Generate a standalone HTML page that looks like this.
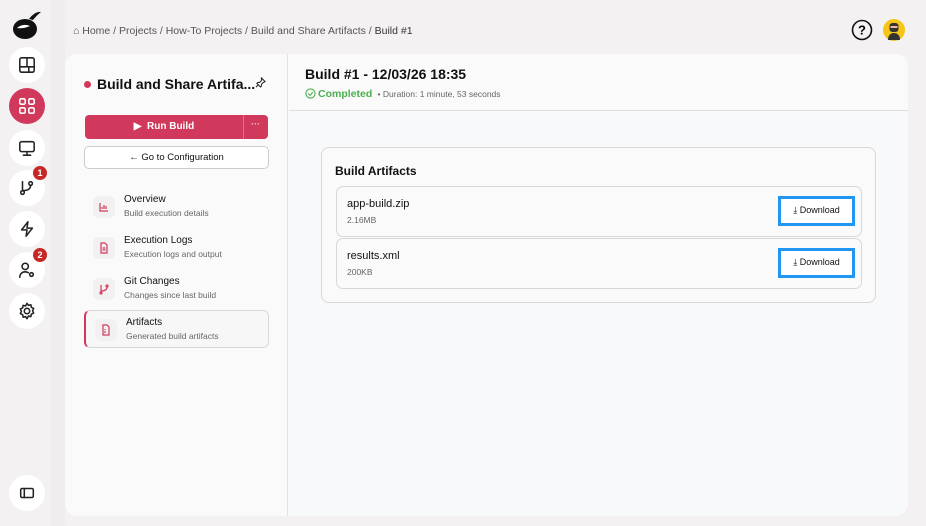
<!DOCTYPE html>
<html><head><style>
*{box-sizing:border-box;margin:0;padding:0}
body{width:926px;height:526px;overflow:hidden;background:#f3f1f2;font-family:"Liberation Sans",sans-serif;color:#111;position:relative}
.rail{position:absolute;left:0;top:0;width:52px;height:526px;background:#f3f1f2}
.strip{position:absolute;left:51px;top:0;width:14px;height:526px;background:#efedee}
.ic{position:absolute;left:9px;width:36px;height:36px;border-radius:50%;background:#fff;display:flex;align-items:center;justify-content:center}
.ic svg{width:18px;height:18px;fill:none;stroke:#222;stroke-width:1.7;stroke-linecap:round;stroke-linejoin:round}
.badge{position:absolute;right:-2px;top:-4px;width:14px;height:14px;border-radius:50%;background:#c62828;color:#fff;font-size:9px;font-weight:bold;display:flex;align-items:center;justify-content:center}
.crumb{position:absolute;left:73px;top:25px;font-size:10.5px;color:#555}
.crumb b{font-weight:normal;color:#333}
.panel{position:absolute;left:65px;top:54px;width:843px;height:462px;background:#fafafa;border-radius:12px;overflow:hidden}
.left{position:absolute;left:0;top:0;width:223px;height:462px;border-right:1px solid #e2e2e2}
.title{position:absolute;left:32px;top:22px;font-size:14px;font-weight:bold}
.dot{position:absolute;left:19px;top:27px;width:7px;height:7px;border-radius:50%;background:#d0395c}
.run{position:absolute;left:20px;top:61px;width:183px;height:24px;background:#d0395c;border-radius:4px;color:#fff;font-size:10px;font-weight:bold}
.run span{position:absolute;left:0;width:158px;top:6px;text-align:center}
.run i{position:absolute;left:158px;top:0;width:1px;height:24px;background:#e07088}
.run em{position:absolute;left:166px;top:4px;font-style:normal;font-size:9px;color:#f3c0cc}
.cfg{position:absolute;left:19px;top:92px;width:185px;height:23px;border:1px solid #ccc;border-radius:5px;background:#fff;font-size:9.5px;text-align:center;line-height:21px}
.nav{position:absolute;left:19px;width:185px;height:38px}
.nav .b{position:absolute;left:9px;top:8px;width:22px;height:22px;border-radius:6px;background:#f2f0f1}
.nav .b svg{position:absolute;left:5px;top:5px;width:12px;height:12px;fill:none;stroke:#d0395c;stroke-width:1.2}
.nav .t{position:absolute;left:40px;top:6px;font-size:10px}
.nav .s{position:absolute;left:40px;top:20px;font-size:8.5px;color:#666}
.nav.act{border:1px solid #d8d8d8;border-left:2px solid #d0395c;border-radius:6px;background:#f7f7f7}
.right{position:absolute;left:224px;top:0;right:0;bottom:0;background:#f8f9fa}
.hdr{height:57px;border-bottom:1px solid #ddd;background:#fafafa}
.card{position:absolute;left:32px;top:93px;width:555px;height:156px;border:1px solid #d8d8d8;border-radius:8px;background:#fafafa}
.row{position:absolute;left:14px;width:526px;height:51px;border:1px solid #d8d8d8;border-radius:7px;background:#fafafa}
.row .n{position:absolute;left:10px;top:11px;font-size:11px}
.row .z{position:absolute;left:10px;top:28px;font-size:8.5px;color:#666}
.dl{position:absolute;right:6px;top:9px;width:77px;height:30px;border:3px solid #2196f3;background:#fff;font-size:9px;text-align:center;line-height:23px}
</style></head><body>
<div class="rail"></div><div class="strip"></div>
<svg style="position:absolute;left:11px;top:9px" width="32" height="32" viewBox="0 0 32 32"><ellipse cx="14" cy="20" rx="12" ry="10" fill="#111"/><path d="M18 10 Q24 2 30 3 Q26 6 22 11Z" fill="#111"/><path d="M6 19 Q12 14 19 17 Q12 20 6 19Z" fill="#fff"/></svg>
<div class="ic" style="top:47px"><svg viewBox="0 0 20 20"><rect x="2" y="2" width="16" height="16" rx="2"/><path d="M2 12h16M10 2v10M12 12v6"/></svg></div>
<div class="ic" style="top:88px;background:#d0395c"><svg viewBox="0 0 20 20" style="stroke:#fff"><rect x="2" y="2" width="6" height="6" rx="1.5"/><rect x="12" y="2" width="6" height="6" rx="1.5"/><rect x="2" y="12" width="6" height="6" rx="1.5"/><rect x="12" y="12" width="6" height="6" rx="1.5"/></svg></div>
<div class="ic" style="top:130px"><svg viewBox="0 0 20 20"><rect x="2" y="3" width="16" height="11" rx="2"/><path d="M10 14v3M6 18h8"/></svg></div>
<div class="ic" style="top:170px"><svg viewBox="0 0 20 20"><circle cx="5" cy="15" r="2"/><path d="M5 3v10M5 13 Q14 13 14 7"/><circle cx="14" cy="5" r="2"/></svg><div class="badge">1</div></div>
<div class="ic" style="top:211px"><svg viewBox="0 0 20 20"><path d="M11 2 4 11h6l-1 7 7-9h-6z"/></svg></div>
<div class="ic" style="top:252px"><svg viewBox="0 0 20 20"><circle cx="8" cy="6" r="3.5"/><path d="M2 18c0-4 3-6 6-6 1.5 0 2.5.3 3.5 1"/><circle cx="15" cy="15" r="2"/></svg><div class="badge">2</div></div>
<div class="ic" style="top:293px"><svg viewBox="0 0 20 20"><circle cx="10" cy="10" r="3"/><path d="M10 1.5l1.6 2.3 2.7-.7.5 2.8 2.6 1.2-1.2 2.6 1.2 2.6-2.6 1.2-.5 2.8-2.7-.7L10 18.5l-1.6-2.3-2.7.7-.5-2.8-2.6-1.2 1.2-2.6-1.2-2.6 2.6-1.2.5-2.8 2.7.7z"/></svg></div>
<div class="ic" style="top:475px"><svg viewBox="0 0 20 20"><rect x="3" y="5" width="14" height="10" rx="1.5"/><path d="M7 5v10"/></svg></div>
<div class="crumb">⌂ Home / Projects / How-To Projects / Build and Share Artifacts / <b>Build #1</b></div>
<svg style="position:absolute;left:851px;top:19px" width="22" height="22" viewBox="0 0 22 22"><circle cx="11" cy="11" r="9.5" fill="none" stroke="#111" stroke-width="1.6"/><text x="11" y="15.5" text-anchor="middle" font-size="13" font-family="Liberation Sans" font-weight="bold">?</text></svg>
<svg style="position:absolute;left:883px;top:19px" width="22" height="22" viewBox="0 0 22 22"><circle cx="11" cy="11" r="11" fill="#f5c518"/><path d="M5 21c0-5 3-7 6-7s6 2 6 7z" fill="#333"/><rect x="6.5" y="4" width="9" height="9" rx="3" fill="#333"/><rect x="7.5" y="7" width="7" height="2" fill="#f3b6a6"/></svg>
<div class="panel">
 <div class="left">
  <div class="dot"></div><div class="title">Build and Share Artifa...</div>
  <svg style="position:absolute;left:190px;top:23px" width="11" height="11" viewBox="0 0 12 12" fill="none" stroke="#222" stroke-width="1.1"><path d="M7 1l4 4-2 1-2 2 0 2-1 1-4-4 1-1h2l2-2z M4 8l-3 3"/></svg>
  <div class="run"><span>▶&nbsp; Run Build</span><i></i><em>···</em></div>
  <div class="cfg">← Go to Configuration</div>
  <div class="nav" style="top:134px"><div class="b"><svg viewBox="0 0 12 12"><path d="M2 2v8h8M4 8V6M6 8V4M8 8V5"/></svg></div><div class="t">Overview</div><div class="s">Build execution details</div></div>
  <div class="nav" style="top:175px"><div class="b"><svg viewBox="0 0 12 12"><path d="M3 1h4l2 2v8H3zM4.5 6h3M4.5 8h3"/></svg></div><div class="t">Execution Logs</div><div class="s">Execution logs and output</div></div>
  <div class="nav" style="top:216px"><div class="b"><svg viewBox="0 0 12 12"><circle cx="3" cy="10" r="1"/><path d="M3 2v7M3 8Q9 8 9 4"/><circle cx="9" cy="3" r="1"/></svg></div><div class="t">Git Changes</div><div class="s">Changes since last build</div></div>
  <div class="nav act" style="top:256px"><div class="b"><svg viewBox="0 0 12 12"><path d="M3 1h4l2 2v8H3zM5 5v1M5 7v2"/></svg></div><div class="t">Artifacts</div><div class="s">Generated build artifacts</div></div>
 </div>
 <div class="right">
  <div class="hdr">
   <div style="position:absolute;left:16px;top:12px;font-size:14px;font-weight:bold">Build #1 - 12/03/26 18:35</div>
   <svg style="position:absolute;left:16px;top:34px" width="11" height="11" viewBox="0 0 12 12" fill="none" stroke="#4caf50" stroke-width="1.2"><circle cx="6" cy="6" r="5"/><path d="M3.5 6l2 2 3-3.5"/></svg>
   <div style="position:absolute;left:29px;top:34px;font-size:10.5px;color:#4caf50;font-weight:bold">Completed <span style="color:#666;font-weight:normal;font-size:8.5px">&nbsp;• Duration: 1 minute, 53 seconds</span></div>
  </div>
  <div class="card">
   <div style="position:absolute;left:13px;top:16px;font-size:12px;font-weight:bold">Build Artifacts</div>
   <div class="row" style="top:38px"><div class="n">app-build.zip</div><div class="z">2.16MB</div><div class="dl">⤓ Download</div></div>
   <div class="row" style="top:90px"><div class="n">results.xml</div><div class="z">200KB</div><div class="dl">⤓ Download</div></div>
  </div>
 </div>
</div>
</body></html>
